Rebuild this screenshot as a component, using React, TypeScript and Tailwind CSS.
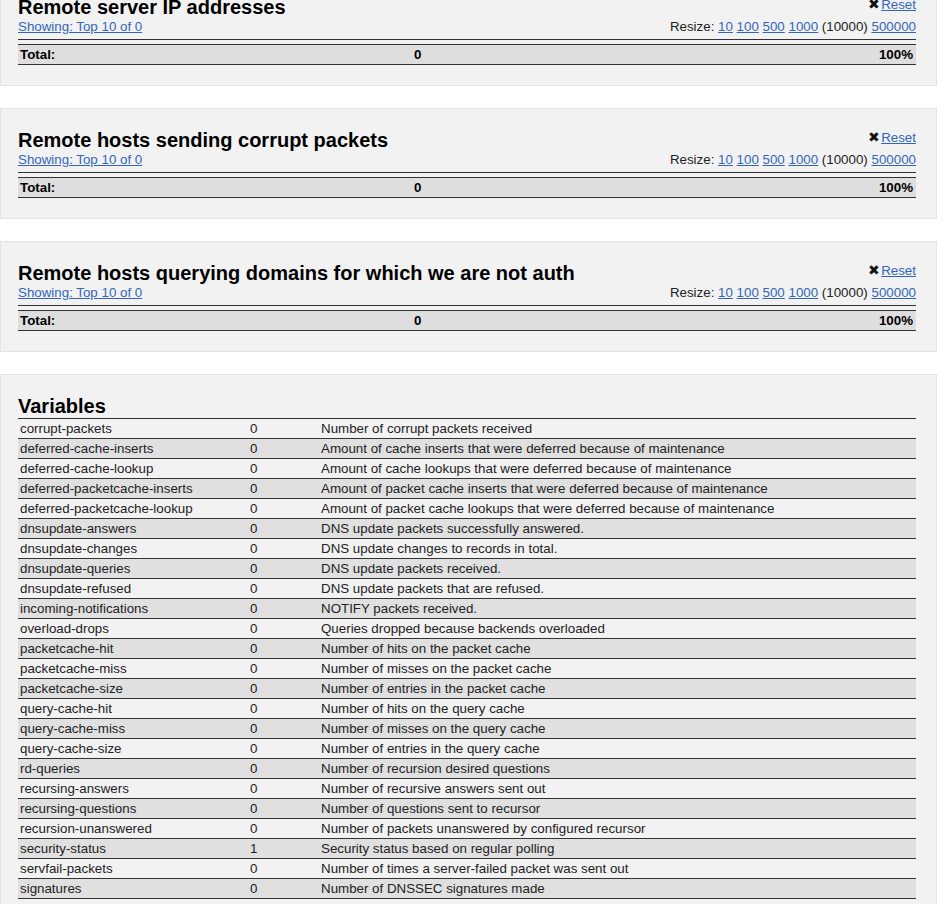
import { ReactNode } from 'react'

const topLists = [
  'Remote server IP addresses',
  'Remote hosts sending corrupt packets',
  'Remote hosts querying domains for which we are not auth',
]

const variables: [string, string, string][] = [
  ['corrupt-packets', '0', 'Number of corrupt packets received'],
  ['deferred-cache-inserts', '0', 'Amount of cache inserts that were deferred because of maintenance'],
  ['deferred-cache-lookup', '0', 'Amount of cache lookups that were deferred because of maintenance'],
  ['deferred-packetcache-inserts', '0', 'Amount of packet cache inserts that were deferred because of maintenance'],
  ['deferred-packetcache-lookup', '0', 'Amount of packet cache lookups that were deferred because of maintenance'],
  ['dnsupdate-answers', '0', 'DNS update packets successfully answered.'],
  ['dnsupdate-changes', '0', 'DNS update changes to records in total.'],
  ['dnsupdate-queries', '0', 'DNS update packets received.'],
  ['dnsupdate-refused', '0', 'DNS update packets that are refused.'],
  ['incoming-notifications', '0', 'NOTIFY packets received.'],
  ['overload-drops', '0', 'Queries dropped because backends overloaded'],
  ['packetcache-hit', '0', 'Number of hits on the packet cache'],
  ['packetcache-miss', '0', 'Number of misses on the packet cache'],
  ['packetcache-size', '0', 'Number of entries in the packet cache'],
  ['query-cache-hit', '0', 'Number of hits on the query cache'],
  ['query-cache-miss', '0', 'Number of misses on the query cache'],
  ['query-cache-size', '0', 'Number of entries in the query cache'],
  ['rd-queries', '0', 'Number of recursion desired questions'],
  ['recursing-answers', '0', 'Number of recursive answers sent out'],
  ['recursing-questions', '0', 'Number of questions sent to recursor'],
  ['recursion-unanswered', '0', 'Number of packets unanswered by configured recursor'],
  ['security-status', '1', 'Security status based on regular polling'],
  ['servfail-packets', '0', 'Number of times a server-failed packet was sent out'],
  ['signatures', '0', 'Number of DNSSEC signatures made'],
  ['tcp-answers', '0', 'Number of answers sent out over TCP'],
  ['tcp-answers-bytes', '0', 'Total size of answers sent out over TCP'],
  ['tcp-queries', '0', 'Number of TCP queries received'],
]

function A({ children }: { children: ReactNode }) {
  return <a href="#" className="text-[#3366bb] underline">{children}</a>
}

function Panel({ children }: { children: ReactNode }) {
  return (
    <div className="bg-[#f2f2f2] border border-[#e4e4e4] pt-[20px] pb-[20px] pl-[17px] pr-[20px]">
      {children}
    </div>
  )
}

function TopList({ title }: { title: string }) {
  return (
    <Panel>
      <div className="flex items-start justify-between">
        <h2 className="text-[20px] leading-[23px] font-bold text-black">{title}</h2>
        <div className="leading-[15px] pt-[1px] flex items-center">
          <span className="text-[#111] text-[14px] leading-[15px] mr-[1px]">✖</span>
          <A>Reset</A>
        </div>
      </div>
      <div className="flex justify-between leading-[15px]">
        <A>Showing: Top 10 of 0</A>
        <div className="text-[#222]">
          Resize: <A>10</A> <A>100</A> <A>500</A> <A>1000</A> (10000) <A>500000</A>
        </div>
      </div>
      <div className="h-[6px] border-b border-[#333]" />
      <div className="mt-[4px] grid grid-cols-[394px_1fr_auto] items-center h-[21px] border-y border-[#333] bg-[#dedede] font-bold px-[2px] text-black">
        <span>Total:</span>
        <span>0</span>
        <span className="pr-[1px]">100%</span>
      </div>
    </Panel>
  )
}

export default function App() {
  return (
    <div className="min-h-screen bg-white overflow-hidden text-[13.33px] text-[#222] font-['Liberation_Sans',Arial,sans-serif]">
      <div className="-mt-[25px] w-[937px] flex flex-col gap-[22px]">
        {topLists.map(t => (
          <TopList key={t} title={t} />
        ))}
        <Panel>
          <h2 className="text-[20px] leading-[23px] font-bold text-black">Variables</h2>
          <div className="flex flex-col">
            {variables.map(([name, value, desc], i) => (
              <div
                key={name}
                className={`grid grid-cols-[230px_71px_1fr] items-center h-[20px] border-t border-[#333] px-[2px] ${
                  i % 2 === 1 ? 'bg-[#e0e0e0]' : ''
                }`}
              >
                <span>{name}</span>
                <span>{value}</span>
                <span>{desc}</span>
              </div>
            ))}
          </div>
        </Panel>
      </div>
    </div>
  )
}
